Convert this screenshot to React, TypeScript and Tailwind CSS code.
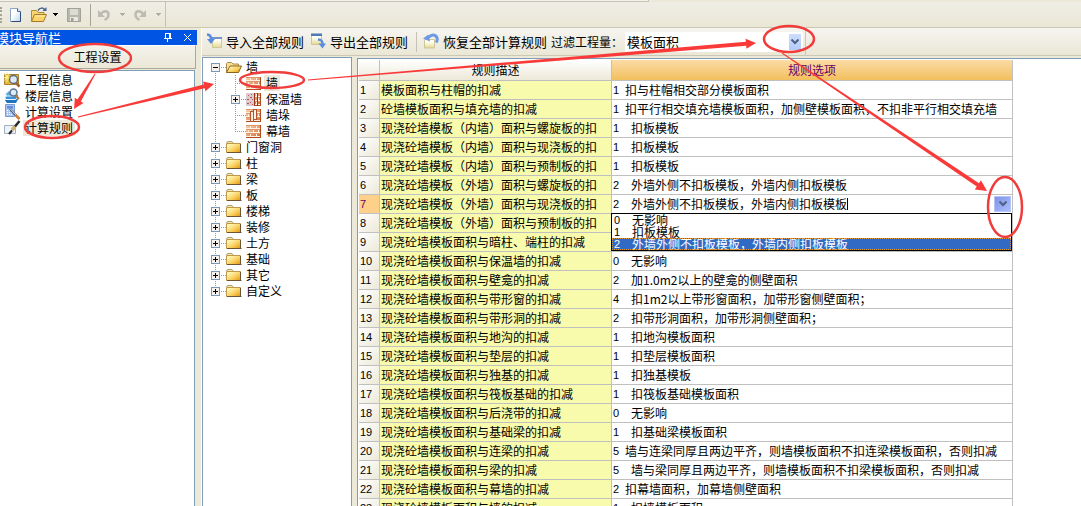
import { useState } from 'react';
import type { ReactNode } from 'react';
import clsx from 'clsx';

type Rule = { desc: string; code: number; text: string; tight?: boolean };

const RULES: Rule[] = [
  { desc: '模板面积与柱帽的扣减', code: 1, text: '扣与柱帽相交部分模板面积', tight: true },
  { desc: '砼墙模板面积与填充墙的扣减', code: 1, text: '扣平行相交填充墙模板面积，加侧壁模板面积，不扣非平行相交填充墙', tight: true },
  { desc: '现浇砼墙模板（内墙）面积与螺旋板的扣', code: 1, text: '扣板模板' },
  { desc: '现浇砼墙模板（内墙）面积与现浇板的扣', code: 1, text: '扣板模板' },
  { desc: '现浇砼墙模板（内墙）面积与预制板的扣', code: 1, text: '扣板模板' },
  { desc: '现浇砼墙模板（外墙）面积与螺旋板的扣', code: 2, text: '外墙外侧不扣板模板，外墙内侧扣板模板' },
  { desc: '现浇砼墙模板（外墙）面积与现浇板的扣', code: 2, text: '外墙外侧不扣板模板，外墙内侧扣板模板' },
  { desc: '现浇砼墙模板（外墙）面积与预制板的扣', code: 2, text: '' },
  { desc: '现浇砼墙模板面积与暗柱、端柱的扣减', code: 0, text: '' },
  { desc: '现浇砼墙模板面积与保温墙的扣减', code: 0, text: '无影响' },
  { desc: '现浇砼墙模板面积与壁龛的扣减', code: 2, text: '加1.0m2以上的壁龛的侧壁面积' },
  { desc: '现浇砼墙模板面积与带形窗的扣减', code: 4, text: '扣1m2以上带形窗面积，加带形窗侧壁面积；' },
  { desc: '现浇砼墙模板面积与带形洞的扣减', code: 2, text: '扣带形洞面积，加带形洞侧壁面积；' },
  { desc: '现浇砼墙模板面积与地沟的扣减', code: 1, text: '扣地沟模板面积' },
  { desc: '现浇砼墙模板面积与垫层的扣减', code: 1, text: '扣垫层模板面积' },
  { desc: '现浇砼墙模板面积与独基的扣减', code: 1, text: '扣独基模板' },
  { desc: '现浇砼墙模板面积与筏板基础的扣减', code: 1, text: '扣筏板基础模板面积' },
  { desc: '现浇砼墙模板面积与后浇带的扣减', code: 0, text: '无影响' },
  { desc: '现浇砼墙模板面积与基础梁的扣减', code: 1, text: '扣基础梁模板面积' },
  { desc: '现浇砼墙模板面积与连梁的扣减', code: 5, text: '墙与连梁同厚且两边平齐，则墙模板面积不扣连梁模板面积，否则扣减', tight: true },
  { desc: '现浇砼墙模板面积与梁的扣减', code: 5, text: '墙与梁同厚且两边平齐，则墙模板面积不扣梁模板面积，否则扣减' },
  { desc: '现浇砼墙模板面积与幕墙的扣减', code: 2, text: '扣幕墙面积，加幕墙侧壁面积', tight: true },
  { desc: '现浇砼墙模板面积与墙的扣减', code: 1, text: '扣墙模板面积' },
];

const CHOICES = [
  { code: 0, text: '无影响' },
  { code: 1, text: '扣板模板' },
  { code: 2, text: '外墙外侧不扣板模板，外墙内侧扣板模板' },
];

const FOLDERS = ['门窗洞', '柱', '梁', '板', '楼梯', '装修', '土方', '基础', '其它', '自定义'];

const ACTIVE_ROW = 6;

/* ---------- icons ---------- */

function NewFileIcon() {
  return (
    <svg width="16" height="16" viewBox="0 0 16 16">
      <defs>
        <linearGradient id="page" x1="0" y1="0" x2="1" y2="1">
          <stop offset="0.4" stopColor="#fff" />
          <stop offset="1" stopColor="#b9d3ef" />
        </linearGradient>
      </defs>
      <path d="M2.5 1.5h7l3 3v10h-10z" fill="url(#page)" stroke="#8fa6c4" />
      <path d="M12.5 5v9.500h-9" fill="none" stroke="#2b4a77" />
      <path d="M9.500 1.500v3h3" fill="#dce9f7" stroke="#4d6a94" />
    </svg>
  );
}

function OpenIcon() {
  return (
    <svg width="18" height="16" viewBox="0 0 18 16">
      <path d="M1.500 14V3.500h5l1.500 2h6V8" fill="#f7d774" stroke="#b08a3c" />
      <path d="M1.500 14.500l3-7h12l-3 7z" fill="#fbd468" stroke="#a8792b" />
      <path d="M5 9h10" stroke="#fff0b0" />
      <path d="M8 3.500c2-3 5-3 6.500-1" fill="none" stroke="#44618f" strokeWidth="1.500" />
      <path d="M12.500 4h4V0z" fill="#44618f" />
    </svg>
  );
}

function SaveIcon() {
  return (
    <svg width="16" height="16" viewBox="0 0 16 16">
      <path d="M1.500 1.500h13v13h-13z" fill="#b9b8ae" stroke="#a3a298" />
      <path d="M4 2h8v6H4z" fill="#dddcd3" />
      <path d="M4 10h8v4H4z" fill="#e9e8df" />
      <path d="M5 11h2.500v3H5z" fill="#9f9e94" />
    </svg>
  );
}

function UndoIcon({ flip }: { flip?: boolean }) {
  return (
    <svg width="14" height="14" viewBox="0 0 14 14" className={clsx(flip && '-scale-x-100')}>
      <path d="M3.500 6.500C6 2 11.500 2 11.500 6.500c0 3-2 4.500-4 5.500" fill="none" stroke="#bdbcb2" strokeWidth="2.500" />
      <path d="M1 2v7h7z" fill="#bdbcb2" />
    </svg>
  );
}

function Caret({ dim }: { dim?: boolean }) {
  return (
    <svg width="6" height="3" viewBox="0 0 6 3" shapeRendering="crispEdges">
      <path d="M0 0h6L3 3z" fill={dim ? '#aeada4' : '#000'} />
    </svg>
  );
}

function TableArrowIcon({ kind }: { kind: 'import' | 'export' | 'restore' }) {
  return (
    <svg width="16" height="16" viewBox="0 0 16 16">
      <defs>
        <linearGradient id="sheet" x1="0" y1="0" x2="0" y2="1">
          <stop offset="0.300" stopColor="#fffef0" />
          <stop offset="1" stopColor="#e2d892" />
        </linearGradient>
      </defs>
      {kind === 'import' && (
        <>
          <path d="M6.500 4.500h9v10h-9z" fill="url(#sheet)" stroke="#cfc79a" />
          <path d="M6 4h10v2H6z" fill="#6f93cc" />
          <path d="M1 1.500c3 0 4 2 4 5" fill="none" stroke="#5b8be0" strokeWidth="2.500" />
          <path d="M1 6h8l-4 5z" fill="#5b8be0" />
        </>
      )}
      {kind === 'export' && (
        <>
          <path d="M1.500 1.500h10v10h-10z" fill="url(#sheet)" stroke="#cfc79a" />
          <path d="M1 0.500h11v2.500H1z" fill="#4f79b8" />
          <path d="M8 6.500c4 0 4.500 2 4.500 5" fill="none" stroke="#5b8be0" strokeWidth="2.500" />
          <path d="M8.500 10.500H16l-3.500 5z" fill="#5b8be0" />
        </>
      )}
      {kind === 'restore' && (
        <>
          <path d="M1.500 6.500h10v8.500h-10z" fill="url(#sheet)" stroke="#cfc79a" />
          <path d="M13 9.500c2.500-3 1-7.500-3-7.500-2 0-3 1-4.500 2.500" fill="none" stroke="#6d9ae6" strokeWidth="3" />
          <path d="M0 5.500l5.500-4 1.500 7z" fill="#6d9ae6" />
        </>
      )}
    </svg>
  );
}

function FolderIcon({ open }: { open?: boolean }) {
  return (
    <svg width="16" height="16" viewBox="0 0 16 16">
      <defs>
        <linearGradient id="folder" x1="0" y1="0" x2="1" y2="1">
          <stop offset="0.200" stopColor="#fff3b0" />
          <stop offset="0.550" stopColor="#f9d565" />
          <stop offset="1" stopColor="#e8920c" />
        </linearGradient>
      </defs>
      {open ? (
        <>
          <path d="M0.500 13.500V4.500l1-1h4l1.500 1.500h5.500v3" fill="#f8df8c" stroke="#a8894f" />
          <path d="M0.500 13.500l3.500-6.500h11.500l-3 6.500z" fill="url(#folder)" stroke="#8a6420" />
        </>
      ) : (
        <>
          <path d="M0.500 4l1-1.500h4.500l1 1.500" fill="#f5e3a4" stroke="#b3a076" />
          <path d="M0.500 4.500h14v9h-14z" fill="url(#folder)" stroke="#c09a4c" />
          <path d="M1 13.500h14.500M14.500 5v9" fill="none" stroke="#6b5638" />
        </>
      )}
    </svg>
  );
}

function WallIcon({ variant }: { variant?: 'insulated' | 'pier' }) {
  return (
    <svg width="16" height="16" viewBox="0 0 16 16" shapeRendering="crispEdges">
      <defs>
        <linearGradient id="brick" x1="0" y1="0" x2="1" y2="1">
          <stop offset="0.100" stopColor="#f7cba8" />
          <stop offset="1" stopColor="#cf682f" />
        </linearGradient>
      </defs>
      <path d="M0 2h15v13H0z" fill="url(#brick)" />
      <path d="M0 5.500h14M0 9.500h14M0 13.500h14M4.500 2v3M10.500 2v3M2.500 6v3M7.500 6v3M12.500 6v3M4.500 10v3M10.500 10v3" stroke="#fff1e2" />
      <path d="M0 2.500h14M0 6.500h14M0 10.500h14" stroke="#dd9468" />
      <path d="M14.500 2v13M0 14.500h15" stroke="#b04c20" />
      {variant === 'insulated' && (
        <>
          <path d="M0 2h8v13H0z" fill="#d8ccd0" />
          <path d="M2 4h1M5 3h1M4 6h2M1 8h2M6 8h1M4 11h1M1 12h2M6 13h1" stroke="#c4504c" />
          <path d="M8.500 2v13M11.500 2v13" stroke="#96301c" strokeWidth="1" />
        </>
      )}
      {variant === 'pier' && (
        <>
          <path d="M4.500 4.500h3v10h-3z" fill="#fde9d6" stroke="#b5532c" />
          <path d="M7.500 2.500h3v10h-3z" fill="#fff4ea" stroke="#b5532c" />
        </>
      )}
    </svg>
  );
}

function NavIcon({ kind }: { kind: number }) {
  return (
    <svg width="17" height="16" viewBox="0 0 17 16">
      {kind === 0 && (
        <>
          <path d="M0.500 2.500h14v10h-14z" fill="#e9b93c" stroke="#a8822a" />
          <path d="M0 5.500h6M0.500 1.500l5 7M5.500 1.500l-5 7M3 0v10" stroke="#fff08c" />
          <circle cx="9.500" cy="7.500" r="4" fill="#dcebfa" stroke="#646b78" strokeWidth="1.500" />
          <path d="M12 11l3.500 3.500" stroke="#9a6434" strokeWidth="2.500" />
        </>
      )}
      {kind === 1 && (
        <>
          <path d="M1 12.500l3-3h11l-3 5.500H3z" fill="#1f72bd" />
          <path d="M1 9.500l3-3h11l-3 5H2z" fill="#3c92d6" stroke="#e6f3fd" />
          <path d="M1.500 6l3-3h9l-3 5h-8z" fill="#57a8e2" stroke="#e6f3fd" />
          <circle cx="9.500" cy="4.500" r="3.500" fill="#dcecf8" stroke="#5d7590" strokeWidth="1.500" />
          <path d="M12 7.500l3 3.500" stroke="#b77a3a" strokeWidth="2" />
        </>
      )}
      {kind === 2 && (
        <>
          <path d="M1.500 0.500h9v12h-9z" fill="#a9c5f0" stroke="#7a9bd0" />
          <path d="M3 2h6v2.500H3z" fill="#5f8fe0" />
          <path d="M3 6.500h6M3 8.500h6M3 10.500h6" stroke="#fff" strokeDasharray="1 1" />
          <path d="M6 5l6 6.500" stroke="#4a5d7c" strokeWidth="2.500" />
          <path d="M6.500 5l5.500 6" stroke="#dbe6f4" />
          <path d="M11.500 11l4 4" stroke="#cf7b32" strokeWidth="2.500" />
        </>
      )}
      {kind === 3 && (
        <>
          <path d="M0.500 5.500h11v8h-11z" fill="#eef3f9" stroke="#a4b0bf" />
          <path d="M15.500 1L11 6.500" stroke="#2a2a2a" strokeWidth="2.500" />
          <path d="M11 6.500L8 10" stroke="#d0b070" strokeWidth="3.500" />
          <path d="M8 10.500L5 14" stroke="#222" strokeWidth="2" />
        </>
      )}
    </svg>
  );
}

function Chevron() {
  return (
    <svg width="8" height="6" viewBox="0 0 8 6">
      <path d="M0.500 0.500L4 4l3.500-3.500" fill="none" stroke="#4d6185" strokeWidth="2" />
    </svg>
  );
}

/* ---------- tree ---------- */

function TreeLines({ toggle, first, last }: { toggle?: '+' | '-'; first?: boolean; last?: boolean }) {
  return (
    <svg width="15" height="16" viewBox="0 0 15 16" className="shrink-0" shapeRendering="crispEdges">
      <path d={clsx(!first && 'M4.500 0v8', !last && 'M4.500 8v8', 'M4 8.500h11')} stroke="#9c9a8c" strokeDasharray="1 1" fill="none" />
      {toggle && (
        <>
          <rect x="0.500" y="4.500" width="8" height="8" fill="#f4f2ea" stroke="#7898b5" />
          <path d={toggle === '+' ? 'M2 8.500h5M4.500 6v5' : 'M2 8.500h5'} stroke="#000" />
        </>
      )}
    </svg>
  );
}

type NodeProps = {
  label: string;
  icon: ReactNode;
  toggle?: '+' | '-';
  first?: boolean;
  last?: boolean;
  child?: boolean;
  selected?: boolean;
};

function TreeNode({ label, icon, toggle, first, last, child, selected }: NodeProps) {
  return (
    <li className="flex h-4 items-center">
      {child && (
        <svg width="20" height="16" className="shrink-0" shapeRendering="crispEdges">
          <path d="M4.500 0v16" stroke="#9c9a8c" strokeDasharray="1 1" />
        </svg>
      )}
      <TreeLines toggle={toggle} first={first} last={last} />
      {icon}
      <span className={clsx('ml-0.5 px-0.5 leading-4', selected && 'bg-[#ece9d8]')}>{label}</span>
    </li>
  );
}

/* ---------- annotations ---------- */

function Arrow({ from, to, thick = 4, head = 12 }: { from: [number, number]; to: [number, number]; thick?: number; head?: number }) {
  const dx = to[0] - from[0];
  const dy = to[1] - from[1];
  const len = Math.hypot(dx, dy);
  const [ux, uy] = [dx / len, dy / len];
  const at = (along: number, side: number) =>
    `${from[0] + ux * along - uy * side},${from[1] + uy * along + ux * side}`;
  const neck = len - head;
  const points = [
    at(0, 0.5),
    at(neck, thick / 2),
    at(neck, head / 2),
    at(len, 0),
    at(neck, -head / 2),
    at(neck, -thick / 2),
    at(0, -0.5),
  ].join(' ');
  return <polygon points={points} fill="#fa3a38" />;
}

function Annotations() {
  return (
    <svg className="pointer-events-none absolute inset-0 z-20 h-full w-full" aria-hidden="true">
      <g fill="none" stroke="#f03c3a" strokeWidth="2.500">
        <ellipse cx="95" cy="58" rx="36" ry="14" />
        <ellipse cx="52" cy="127" rx="27" ry="11" />
        <ellipse cx="272" cy="80" rx="32" ry="8" />
        <ellipse cx="789" cy="39" rx="25" ry="13" />
        <ellipse cx="1005" cy="207" rx="17" ry="30" />
      </g>
      <Arrow from={[95, 74]} to={[74, 109]} head={10} />
      <Arrow from={[78, 117]} to={[214, 84]} head={10} />
      <Arrow from={[308, 80]} to={[756, 43]} head={10} />
      <Arrow from={[782, 53]} to={[987, 191]} head={11} />
    </svg>
  );
}

/* ---------- page ---------- */

function Code({ value, tight }: { value: number; tight?: boolean }) {
  return (
    <span className={clsx("inline-block shrink-0 font-['Liberation_Sans',sans-serif] text-[11px]", tight ? 'w-3' : 'w-[18px]')}>
      {value}
    </span>
  );
}

function ToolButton({ icon, label }: { icon: ReactNode; label: string }) {
  return (
    <button type="button" className="flex shrink-0 items-center gap-1 text-[13px] whitespace-nowrap">
      {icon}
      {label}
    </button>
  );
}

function ActiveCell() {
  const [value, setValue] = useState(CHOICES[2].text);
  return (
    <div className="relative flex h-[18px] items-center">
      <Code value={2} />
      <input
        aria-label="规则选项"
        value={value}
        onChange={(e) => setValue(e.target.value)}
        className="h-4 w-[216px] p-0 leading-4 outline-none"
      />
      <span className="h-3 w-px bg-black" />
      <button type="button" aria-label="展开选项" className="mr-px ml-auto flex h-4 w-[17px] items-center justify-center border border-[#b4c4fa] bg-linear-to-br from-[#7f92e4] to-[#abc0ff]">
        <Chevron />
      </button>
      <ul className="absolute top-[18px] right-0 -left-0.5 z-10 border border-black bg-white">
        {CHOICES.map((c, i) => (
          <li
            key={c.code}
            className={clsx(
              'flex h-3 items-center pl-0.5 leading-3',
              i === 2 && 'bg-[#316ac5] text-white outline-1 -outline-offset-1 outline-[#e0973a] outline-dotted',
            )}
          >
            <Code value={c.code} />
            {c.text}
          </li>
        ))}
      </ul>
    </div>
  );
}

function RuleTable() {
  return (
    <table className="w-[654px] table-fixed border-separate border-spacing-0 leading-[18px]">
      <colgroup>
        <col className="w-[21px]" />
        <col className="w-[232px]" />
        <col />
      </colgroup>
      <thead>
        <tr className="h-[21px]">
          <th className="border-r border-b border-[#c0c0c0] bg-linear-to-b from-white to-[#ece9d8] p-0" />
          <th className="border-r border-b border-[#c0c0c0] bg-linear-to-b from-white to-[#ece9d8] p-0 font-normal">规则描述</th>
          <th className="border-r border-b border-[#c0c0c0] bg-linear-to-b from-[#fbdca4] to-[#f2bf5c] p-0 font-normal text-[#660066]">规则选项</th>
        </tr>
      </thead>
      <tbody>
        {RULES.map((r, i) => (
          <tr key={i} className="h-[19px]">
            <th
              scope="row"
              className={clsx(
                "border-r border-b border-[#c0c0c0] p-0 pl-px text-left font-['Liberation_Sans',sans-serif] text-[11px] font-normal",
                i === ACTIVE_ROW ? 'bg-[#ffd08a] text-[#660066]' : 'bg-linear-to-br from-white to-[#ece9d8]',
              )}
            >
              {i + 1}
            </th>
            <td className="border-r border-b border-[#c0c0c0] bg-[#f8fbab] p-0 pl-px whitespace-nowrap">{r.desc}</td>
            <td className="border-r border-b border-[#c0c0c0] p-0 pl-px whitespace-nowrap">
              {i === ACTIVE_ROW && <ActiveCell />}
              {i !== ACTIVE_ROW && r.text && (
                <div className="flex h-[18px] items-center">
                  <Code value={r.code} tight={r.tight} />
                  {r.text}
                </div>
              )}
            </td>
          </tr>
        ))}
      </tbody>
    </table>
  );
}

export default function App() {
  return (
    <div className="relative flex h-screen flex-col overflow-hidden bg-[#ece9d8] font-['Noto_Sans_CJK_SC',sans-serif] text-xs text-black">
      <div className="h-0.5 w-3/5 shrink-0 border-r border-b border-[#c5c2b3] bg-[#f2f1ea]" />

      {/* Main toolbar */}
      <header className="flex h-[26px] shrink-0 border-b border-[#cbc8b6] bg-linear-to-b from-[#efeee6] to-[#eae7d6]">
        <div className="flex items-center border-r border-[#c5c2b3] pr-1">
          <span className="h-4 w-0.5 border-l-2 border-dotted border-[#a5a394]" />
          <button type="button" aria-label="新建" className="ml-1.5"><NewFileIcon /></button>
          <button type="button" aria-label="打开" className="ml-1.5 flex items-center gap-1"><OpenIcon /><Caret /></button>
          <button type="button" aria-label="保存" className="ml-2"><SaveIcon /></button>
          <span className="ml-2 h-[22px] w-px bg-[#a5a394]" />
          <button type="button" aria-label="撤销" className="ml-1.5 flex items-center gap-2"><UndoIcon /><Caret dim /></button>
          <button type="button" aria-label="重做" className="ml-2 flex items-center gap-2"><UndoIcon flip /><Caret dim /></button>
        </div>
      </header>

      <div className="flex min-h-0 flex-1">
        {/* Navigation */}
        <aside className="flex w-[197px] shrink-0 flex-col pt-0.5">
          <div className="flex h-[15px] items-center overflow-hidden bg-[#0054e3] text-white">
            <h2 className="-ml-1 text-[13px] leading-[15px] whitespace-nowrap">模块导航栏</h2>
            <button type="button" aria-label="固定" className="ml-auto">
              <svg width="8" height="9" viewBox="0 0 8 9" shapeRendering="crispEdges">
                <path d="M1 0.500h6M1.500 0v6M5.500 0v6M6.500 0v6M0 5.500h8M3.500 6v3" stroke="#fff" fill="none" />
              </svg>
            </button>
            <button type="button" aria-label="关闭" className="mr-1.5 ml-3">
              <svg width="7" height="7" viewBox="0 0 7 7">
                <path d="M0 0l7 7M7 0L0 7" stroke="#fff" />
              </svg>
            </button>
          </div>
          <button type="button" className="mr-px h-6 border-t border-r border-b border-t-white border-r-[#aca899] border-b-[#aca899] bg-linear-to-b from-[#f3f2eb] to-[#ebe8d7]">
            工程设置
          </button>
          <ul className="mt-px mr-0.5 min-h-0 flex-1 border-t border-r border-[#7f9db9] bg-white pt-px">
            {['工程信息', '楼层信息', '计算设置', '计算规则'].map((label, i) => (
              <li key={label} className="flex h-4 items-center gap-0.5 pl-1">
                <NavIcon kind={i} />
                <a href="#" className={clsx('px-0.5 leading-4', i === 3 && 'bg-[#ece9d8]')}>{label}</a>
              </li>
            ))}
          </ul>
        </aside>

        <main className="ml-1 flex min-w-0 flex-1 flex-col border-l border-white">
          <div className="flex h-7 shrink-0 border-b border-[#cbc8b6] bg-linear-to-b from-[#f6f5f0] to-[#eae7d6]">
            <div className="flex items-center border-r border-[#cbc8b6] pr-0.5 pl-1">
              <ToolButton icon={<TableArrowIcon kind="import" />} label="导入全部规则" />
              <span className="w-1.5" />
              <ToolButton icon={<TableArrowIcon kind="export" />} label="导出全部规则" />
              <span className="mr-1.5 ml-2 h-5 w-px bg-[#c5c2b3]" />
              <ToolButton icon={<TableArrowIcon kind="restore" />} label="恢复全部计算规则" />
              <label htmlFor="quantity" className="ml-1 whitespace-nowrap">过滤工程量：</label>
              <div className="relative ml-0.5">
                <select id="quantity" className="block h-5 w-[178px] appearance-none bg-white pl-0.5 text-[13px] leading-4">
                  <option>模板面积</option>
                </select>
                <span className="pointer-events-none absolute top-0.5 right-0.5 flex h-4 w-3 items-center justify-center bg-linear-to-b from-[#cddcfd] to-[#b3cbfa]">
                  <Chevron />
                </span>
              </div>
            </div>
          </div>

          <div className="flex min-h-0 flex-1 pt-px">
            <ul className="w-[150px] shrink-0 border-t border-r border-l border-[#7f9db9] bg-white pt-px pl-2">
              <TreeNode label="墙" icon={<FolderIcon open />} toggle="-" first />
              <TreeNode label="墙" icon={<WallIcon />} child selected />
              <TreeNode label="保温墙" icon={<WallIcon variant="insulated" />} toggle="+" child />
              <TreeNode label="墙垛" icon={<WallIcon variant="pier" />} child />
              <TreeNode label="幕墙" icon={<WallIcon />} child last />
              {FOLDERS.map((f, i) => (
                <TreeNode key={f} label={f} icon={<FolderIcon />} toggle="+" last={i === FOLDERS.length - 1} />
              ))}
            </ul>
            <div className="mt-px ml-[5px] min-w-0 flex-1 overflow-hidden border-t border-l border-[#7f9db9] bg-white pt-px pl-px">
              <RuleTable />
            </div>
          </div>
        </main>
      </div>

      <Annotations />
    </div>
  );
}
